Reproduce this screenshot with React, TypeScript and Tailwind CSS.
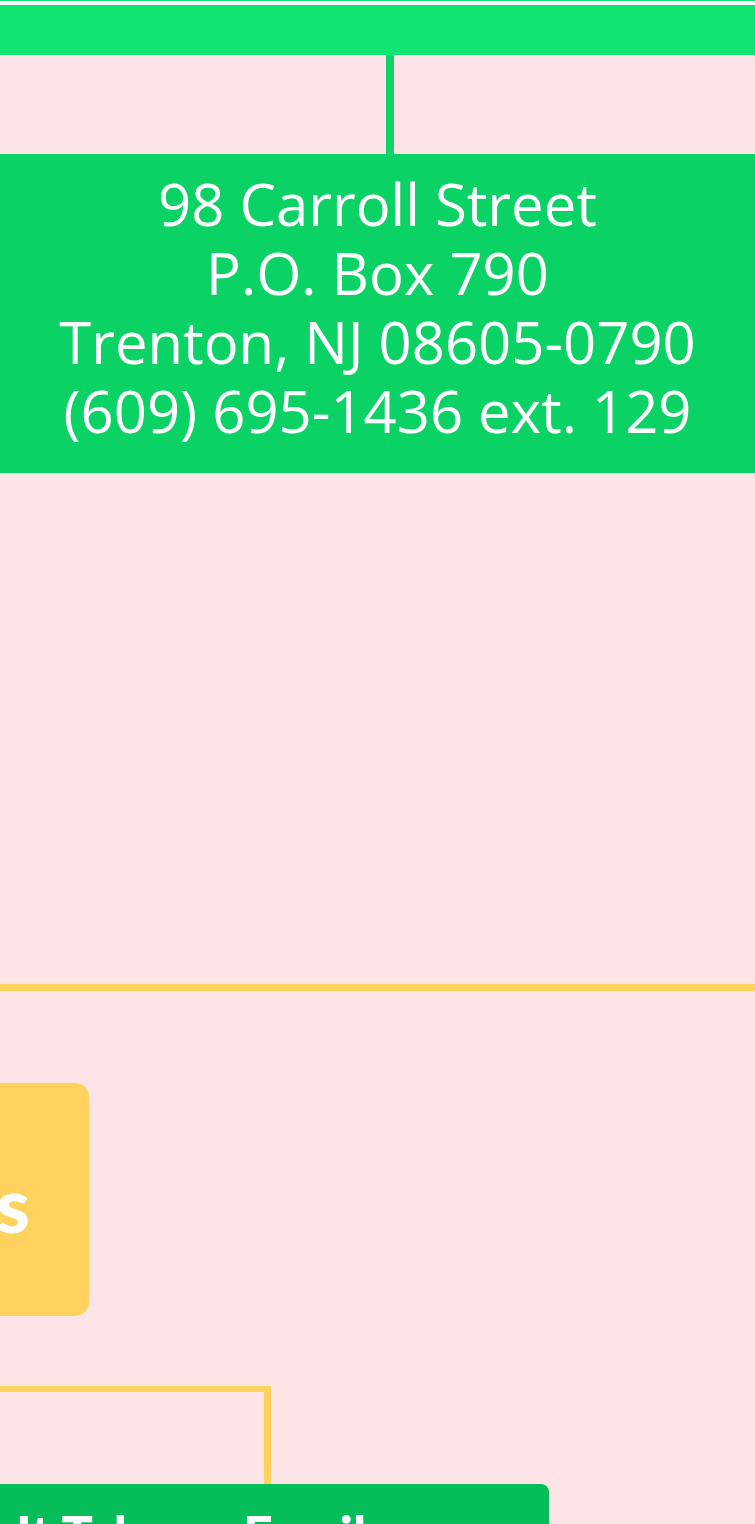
export default function App() {
  return (
    <div className="w-[755px] h-[1524px] overflow-hidden bg-[#fde4e7] flex flex-col">
      <div className="h-px shrink-0 bg-[#10e370]" />
      <div className="h-[4px] shrink-0 bg-white" />
      <div className="h-[50px] shrink-0 bg-[#10e370]" />
      <div className="h-[99px] shrink-0 pl-[386px] flex">
        <div className="w-[8px] h-full bg-[#0fd366]" />
      </div>
      <div className="h-[319px] shrink-0 bg-[#0ad264] text-white text-center font-['Open_Sans',sans-serif] font-medium text-[58px] leading-[69px] pt-[15px]">
        <div>98 Carroll Street</div>
        <div>P.O. Box 790</div>
        <div>Trenton, NJ 08605-0790</div>
        <div>(609) 695-1436 ext. 129</div>
      </div>
      <div className="mt-[511px] h-[7px] shrink-0 bg-[#ffd25e]" />
      <div className="mt-[92px] ml-[-311px] w-[400px] h-[233px] shrink-0 rounded-[14px] bg-[#ffd25e] text-white text-right pr-[59px] pt-[83px] font-['Lato',sans-serif] font-black text-[76px] leading-none">
        Programs
      </div>
      <div className="mt-[70px] ml-[-10px] w-[281px] h-[98px] shrink-0 border-t-[6px] border-r-[7px] border-[#ffd25e]" />
      <div className="ml-[-200px] w-[749px] h-[100px] shrink-0 rounded-[8px] bg-[#05be5a] text-white pl-[216px] pt-[23px] font-['Lato',sans-serif] font-black text-[52px] leading-none whitespace-nowrap">
        It Takes a Family
      </div>
    </div>
  );
}
